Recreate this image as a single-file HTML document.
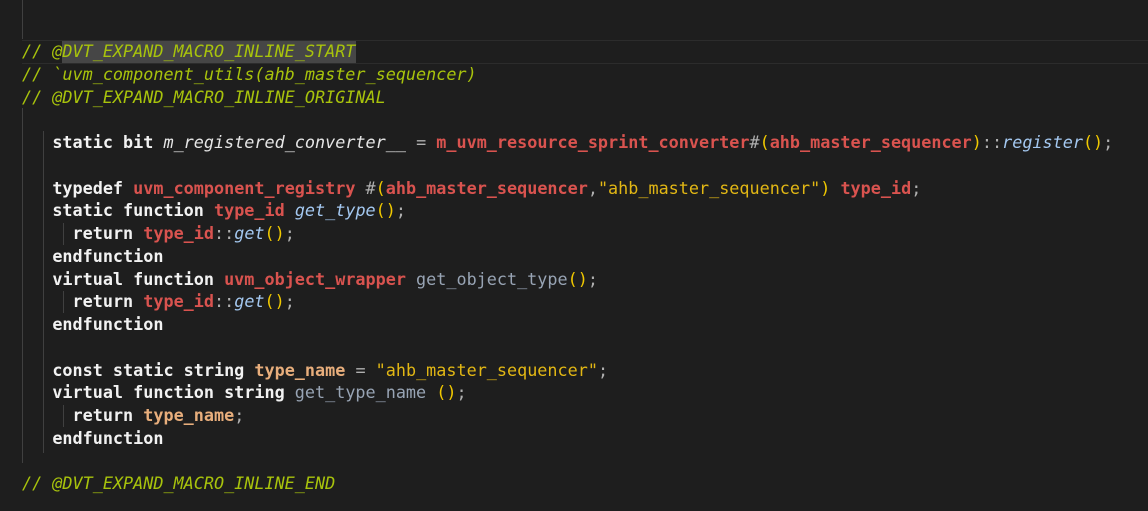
<!DOCTYPE html>
<html><head><meta charset="utf-8"><style>
html,body{margin:0;padding:0;background:#1e1e1e;width:1148px;height:511px;overflow:hidden}
.ed{position:absolute;left:0;top:0;width:1148px;height:511px}
.l{position:absolute;left:22px;height:22.75px;line-height:22.75px;white-space:pre;font-family:"DejaVu Sans Mono","Liberation Mono",monospace;font-size:16.8px;color:#d4d4d4}
.c{color:#a8c30c;font-style:italic}
.k{color:#f2f2f2;font-weight:bold}
.r{color:#d9534f;font-weight:bold}
.f{color:#a4c8f0;font-style:italic}
.m{color:#e6e6e6;font-style:italic}
.p{color:#f0c800}
.s{color:#e2b714}
.o{color:#e8ae7c;font-weight:bold}
.g{color:#98a4b4}
.w{color:#b0b0b0}
.gd{position:absolute;width:1px;background:#404040}
</style></head><body><div class="ed">
<div style="position:absolute;left:22px;top:40px;width:1126px;height:22px;border-top:1px solid #2c2c2c;border-bottom:1px solid #2c2c2c"></div>
<div style="position:absolute;left:62px;top:41px;width:294px;height:22px;background:#464646"></div>
<div class="gd" style="left:22px;top:0;height:39px"></div>
<div class="gd" style="left:22px;top:108px;height:355px"></div>
<div class="gd" style="left:43px;top:131px;height:322px"></div>
<div class="gd" style="left:63px;top:223px;height:22px"></div>
<div class="gd" style="left:63px;top:291px;height:22px"></div>
<div class="gd" style="left:63px;top:405px;height:22px"></div>
<div class="l" style="top:40px"><span class="c">// @DVT_EXPAND_MACRO_INLINE_START</span></div>
<div class="l" style="top:62.75px"><span class="c">// `uvm_component_utils(ahb_master_sequencer)</span></div>
<div class="l" style="top:85.5px"><span class="c">// @DVT_EXPAND_MACRO_INLINE_ORIGINAL</span></div>
<div class="l" style="top:131px">   <span class="k">static bit</span> <span class="m">m_registered_converter__</span> <span class="w">=</span> <span class="r">m_uvm_resource_sprint_converter</span><span class="w">#</span><span class="p">(</span><span class="r">ahb_master_sequencer</span><span class="p">)</span><span class="w">::</span><span class="f">register</span><span class="p">()</span><span class="w">;</span></div>
<div class="l" style="top:176.5px">   <span class="k">typedef</span> <span class="r">uvm_component_registry</span> <span class="w">#</span><span class="p">(</span><span class="r">ahb_master_sequencer</span><span class="w">,</span><span class="s">"ahb_master_sequencer"</span><span class="p">)</span> <span class="r">type_id</span><span class="w">;</span></div>
<div class="l" style="top:199.25px">   <span class="k">static function</span> <span class="r">type_id</span> <span class="f">get_type</span><span class="p">()</span><span class="w">;</span></div>
<div class="l" style="top:222px">     <span class="k">return</span> <span class="r">type_id</span><span class="w">::</span><span class="f">get</span><span class="p">()</span><span class="w">;</span></div>
<div class="l" style="top:244.75px">   <span class="k">endfunction</span></div>
<div class="l" style="top:267.5px">   <span class="k">virtual function</span> <span class="r">uvm_object_wrapper</span> <span class="g">get_object_type</span><span class="p">()</span><span class="w">;</span></div>
<div class="l" style="top:290.25px">     <span class="k">return</span> <span class="r">type_id</span><span class="w">::</span><span class="f">get</span><span class="p">()</span><span class="w">;</span></div>
<div class="l" style="top:313px">   <span class="k">endfunction</span></div>
<div class="l" style="top:358.5px">   <span class="k">const static string</span> <span class="o">type_name</span> <span class="w">=</span> <span class="s">"ahb_master_sequencer"</span><span class="w">;</span></div>
<div class="l" style="top:381.25px">   <span class="k">virtual function string</span> <span class="g">get_type_name</span> <span class="p">()</span><span class="w">;</span></div>
<div class="l" style="top:404px">     <span class="k">return</span> <span class="o">type_name</span><span class="w">;</span></div>
<div class="l" style="top:426.75px">   <span class="k">endfunction</span></div>
<div class="l" style="top:472.25px"><span class="c">// @DVT_EXPAND_MACRO_INLINE_END</span></div>
</div></body></html>
